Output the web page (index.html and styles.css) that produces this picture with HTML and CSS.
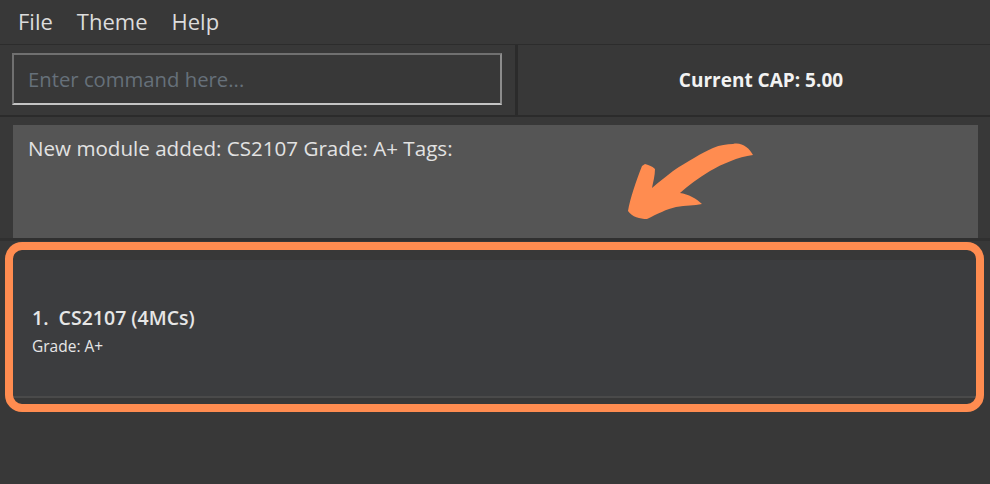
FILE: index.html
```html
<!DOCTYPE html>
<html>
<head>
<meta charset="utf-8">
<link rel="stylesheet" href="styles.css">
</head>
<body>
<div class="app">
  <nav class="menubar">
    <span class="menu-item">File</span>
    <span class="menu-item">Theme</span>
    <span class="menu-item">Help</span>
  </nav>
  <div class="command-row">
    <div class="command-pane">
      <div class="command-field">Enter command here...</div>
    </div>
    <div class="divider"></div>
    <div class="cap-pane">Current CAP: 5.00</div>
  </div>
  <div class="result-area">
    <div class="result-box">New module added: CS2107 Grade: A+ Tags:</div>
    <svg class="arrow" width="140" height="90" viewBox="620 135 140 90">
      <path fill="#ff8c50" d="M733 143 C742 141 749 147 753 154 C738 156 722 163 710 170 C698 177 688 185 680 192 C688 193 697 198 702 203 C694 205 686 204 676 206 C667 208 657 213 647 218 C640 218 632 216 628 210 C630 198 636 180 642 165 L645 163 C648 164 652 165 655 168 C655 175 653 181 652 187 C660 180 667 175 673 170 C688 160 702 152 713 147 C720 144 727 143 733 143 Z"/>
    </svg>
  </div>
  <div class="list-panel">
    <div class="list-cell">
      <div class="cell-title">1.&nbsp;&nbsp;CS2107 (4MCs)</div>
      <div class="cell-grade">Grade: A+</div>
    </div>
    <div class="highlight"></div>
  </div>
</div>
</body>
</html>
```

FILE: styles.css
```css
html, body {
  margin: 0;
  padding: 0;
  background: #383838;
}
.app {
  width: 990px;
  height: 484px;
  font-family: "Open Sans", "Noto Sans", sans-serif;
  overflow: hidden;
}
.menubar {
  height: 45px;
  display: flex;
  align-items: center;
  gap: 24px;
  padding-left: 18px;
  border-bottom: 1px solid #2c2c2c;
  box-sizing: border-box;
  background: #383838;
}
.menu-item {
  color: #dcdcdc;
  font-size: 22px;
  line-height: 1;
  padding-bottom: 2px;
}
.command-row {
  display: flex;
  height: 72px;
  border-bottom: 2px solid #2b2b2b;
  box-sizing: border-box;
}
.command-pane {
  width: 515px;
  padding: 8px 13px 8px 12px;
  box-sizing: border-box;
}
.command-field {
  height: 52px;
  box-sizing: border-box;
  border-top: 2px solid #707070;
  border-left: 2px solid #707070;
  border-right: 2px solid #8c8c8c;
  border-bottom: 2px solid #c4c4c4;
  padding-left: 14px;
  display: flex;
  align-items: center;
  color: #66707a;
  font-size: 20.3px;
}
.divider {
  width: 3px;
  background: #2b2b2b;
}
.cap-pane {
  flex: 1;
  display: flex;
  align-items: center;
  justify-content: center;
  padding-left: 14px;
  color: #f2f2f2;
  font-weight: 700;
  font-size: 19px;
}
.result-area {
  position: relative;
  padding: 8px 12px 0 13px;
  height: 121px;
  box-sizing: border-box;
}
.result-box {
  height: 113px;
  background: #555555;
  color: #e2e2e2;
  font-size: 20.6px;
  line-height: 28px;
  padding: 9px 15px;
  box-sizing: border-box;
}
.arrow {
  position: absolute;
  left: 620px;
  top: 19px;
}
.list-panel {
  position: relative;
  height: 245px;
  border-top: 3px solid #303030;
  box-sizing: border-box;
  padding: 19px 10px 0 8px;
}
.list-cell {
  height: 138px;
  background: #3c3d3f;
  border-bottom: 2px solid #4a4a4a;
  box-sizing: border-box;
  padding: 45px 24px 0 24px;
  color: #e6e6e6;
}
.cell-title {
  font-size: 19.5px;
  font-weight: 600;
  line-height: 26px;
}
.cell-grade {
  font-size: 15.5px;
  line-height: 20px;
  margin-top: 5px;
}
.highlight {
  position: absolute;
  left: 5px;
  top: 1px;
  width: 979px;
  height: 170px;
  border: 8px solid #ff8c50;
  border-radius: 17px;
  box-sizing: border-box;
}
```
